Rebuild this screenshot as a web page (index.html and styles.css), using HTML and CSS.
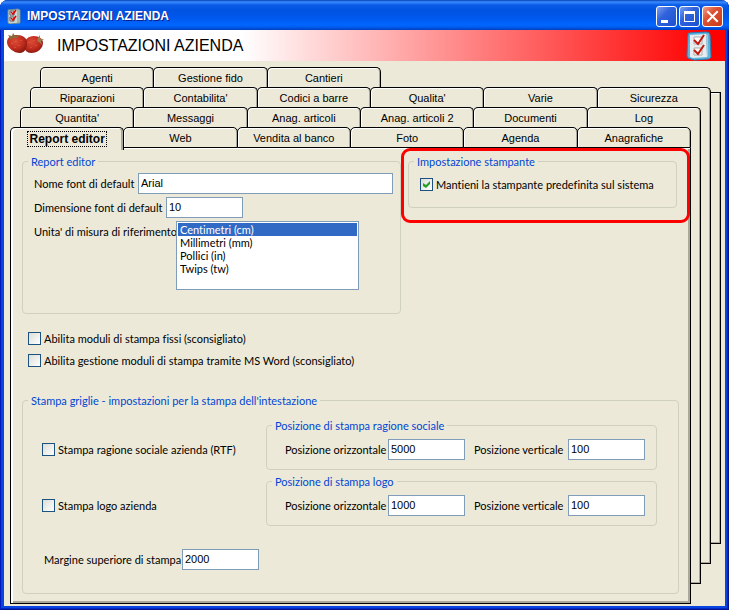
FILE: index.html
```html
<!DOCTYPE html>
<html lang="it">
<head>
    <meta charset="UTF-8">
    <meta name="viewport" content="width=device-width, initial-scale=1.0">
    <title>IMPOSTAZIONI AZIENDA</title>
    <link rel="stylesheet" href="styles.css">
</head>
<body>
    <div class="window">
        <div class="titlebar">
            <svg class="title-icon" width="14" height="16" viewBox="0 0 14 16" aria-hidden="true">
                <path d="M1 2l10-1 2 1v13l-10 1-2-1z" fill="#c9d3d6" stroke="#6d8b96"/>
                <path d="M11 2v13" stroke="#7d9a7d"/>
                <path d="M3 3h4v4h-4zM3 9h4v4h-4z" fill="#fff" stroke="#555"/>
                <path d="M4 4l2 2 3-4M4 10l2 2 3-4" fill="none" stroke="#e00000" stroke-width="1.5"/>
            </svg>
            <span class="title-text">IMPOSTAZIONI AZIENDA</span>
            <button class="win-btn" aria-label="Riduci a icona">
                <svg width="19" height="19" viewBox="0 0 19 19"><path d="M4 13h7v3H4z" fill="#fff"/></svg>
            </button>
            <button class="win-btn" aria-label="Ingrandisci">
                <svg width="19" height="19" viewBox="0 0 19 19"><path d="M4 4h11v11H4zM5 7v7h9V7z" fill="#fff" fill-rule="evenodd"/></svg>
            </button>
            <button class="win-btn close" aria-label="Chiudi">
                <svg width="19" height="19" viewBox="0 0 19 19"><path d="M5 5l9 9M14 5l-9 9" stroke="#fff" stroke-width="2" stroke-linecap="square"/></svg>
            </button>
        </div>

        <header class="banner">
            <svg class="berries" width="38" height="22" viewBox="0 0 38 22" aria-hidden="true">
                <defs>
                    <radialGradient id="berry" cx="40%" cy="35%" r="70%">
                        <stop offset="0" stop-color="#dc4a34"/>
                        <stop offset="0.6" stop-color="#c02c1e"/>
                        <stop offset="1" stop-color="#84180f"/>
                    </radialGradient>
                </defs>
                <path d="M17 12c0-5 4-9 10-9 5 0 9 3 9 7 0 5-5 10-12 10-4 0-7-3-7-8z" fill="url(#berry)"/>
                <path d="M0 9C0 4 5 2 10 2c6 0 10 3 10 8 0 6-3 10-7 10C7 20 0 15 0 9z" fill="url(#berry)"/>
                <path d="M3 5L1 2l4 1 1-3 2 3 5-1-3 3-4 0-3 2z" fill="#8a6a3a"/>
                <path d="M31 5l2-3 0 4 4 0-3 2 1 4-3-3-2-1z" fill="#a07a4a"/>
                <path d="M5 10v1M9 8v1M14 7v1M8 14v1M12 12v1M22 9v1M27 7v1M24 14v1M29 12v1" stroke="#e06a50"/>
            </svg>
            <h1>IMPOSTAZIONI AZIENDA</h1>
            <svg width="26" height="30" viewBox="0 0 26 30" aria-hidden="true">
                <path d="M3 2L20 1Q24 1 24 4L25 26Q24 28 22 28L8 29 2 27Q1 26 1 24L2 4Q2 2 3 2z" fill="#5fb4de" stroke="#2b7fb4"/>
                <path d="M4 4l16-1 1 23-14 1-3-1z" fill="#e6ecef"/>
                <path d="M20 3l2 1v21l-1 1z" fill="#b4c4cd"/>
                <path d="M8 6h8v7H8zM8 17h8v7H8z" fill="#fafafa" stroke="#aaa"/>
                <path d="M8 9l4 4 6-9M8 19l4 4 6-9" fill="none" stroke="#c4170c" stroke-width="2"/>
            </svg>
        </header>

        <main class="tab-stack">
            <div class="sheet sheet-4">
                <div class="tab-row">
                    <button class="tab">Agenti</button>
                    <button class="tab">Gestione fido</button>
                    <button class="tab">Cantieri</button>
                </div>
            </div>
            <div class="sheet-edge"></div>
            <div class="sheet sheet-3">
                <div class="tab-row">
                    <button class="tab">Riparazioni</button>
                    <button class="tab">Contabilita'</button>
                    <button class="tab">Codici a barre</button>
                    <button class="tab">Qualita'</button>
                    <button class="tab">Varie</button>
                    <button class="tab">Sicurezza</button>
                </div>
                <div class="page"></div>
            </div>
            <div class="sheet sheet-2">
                <div class="tab-row">
                    <button class="tab">Quantita'</button>
                    <button class="tab">Messaggi</button>
                    <button class="tab">Anag. articoli</button>
                    <button class="tab">Anag. articoli 2</button>
                    <button class="tab">Documenti</button>
                    <button class="tab">Log</button>
                </div>
                <div class="page"></div>
            </div>
            <div class="sheet sheet-1">
                <div class="tab-row front">
                    <button class="tab active"><span>Report editor</span></button>
                    <button class="tab">Web</button>
                    <button class="tab">Vendita al banco</button>
                    <button class="tab">Foto</button>
                    <button class="tab">Agenda</button>
                    <button class="tab">Anagrafiche</button>
                </div>
                <form class="page front-page">
                    <div class="top-row">
                        <fieldset class="report">
                            <legend>Report editor</legend>
                            <div class="field">
                                <label class="w-font" for="font">Nome font di default</label>
                                <input class="wide" type="text" id="font" value="Arial">
                            </div>
                            <div class="field">
                                <label class="w-size" for="size">Dimensione font di default</label>
                                <input type="text" id="size" value="10">
                            </div>
                            <div class="field list-field">
                                <label class="w-unit" for="unit">Unita' di misura di riferimento</label>
                                <select id="unit" size="5">
                                    <option selected>Centimetri (cm)</option>
                                    <option>Millimetri (mm)</option>
                                    <option>Pollici (in)</option>
                                    <option>Twips (tw)</option>
                                </select>
                            </div>
                        </fieldset>
                        <div class="highlight">
                            <fieldset class="printer">
                                <legend>Impostazione stampante</legend>
                                <label class="check"><input type="checkbox" checked>Mantieni la stampante predefinita sul sistema</label>
                            </fieldset>
                        </div>
                    </div>

                    <div class="modules">
                        <label class="check"><input type="checkbox">Abilita moduli di stampa fissi (sconsigliato)</label>
                        <label class="check"><input type="checkbox">Abilita gestione moduli di stampa tramite MS Word (sconsigliato)</label>
                    </div>

                    <fieldset class="grids">
                        <legend>Stampa griglie - impostazioni per la stampa dell'intestazione</legend>
                        <div class="grid-rows">
                            <label class="check"><input type="checkbox">Stampa ragione sociale azienda (RTF)</label>
                            <fieldset class="position">
                                <legend>Posizione di stampa ragione sociale</legend>
                                <div class="field">
                                    <label class="w-pos" for="rsX">Posizione orizzontale</label>
                                    <input type="text" id="rsX" value="5000">
                                </div>
                                <div class="field">
                                    <label class="w-pos-v" for="rsY">Posizione verticale</label>
                                    <input type="text" id="rsY" value="100">
                                </div>
                            </fieldset>
                            <label class="check"><input type="checkbox">Stampa logo azienda</label>
                            <fieldset class="position">
                                <legend>Posizione di stampa logo</legend>
                                <div class="field">
                                    <label class="w-pos" for="logoX">Posizione orizzontale</label>
                                    <input type="text" id="logoX" value="1000">
                                </div>
                                <div class="field">
                                    <label class="w-pos-v" for="logoY">Posizione verticale</label>
                                    <input type="text" id="logoY" value="100">
                                </div>
                            </fieldset>
                        </div>
                        <div class="field margin-field">
                            <label class="w-margin" for="margin">Margine superiore di stampa</label>
                            <input type="text" id="margin" value="2000">
                        </div>
                    </fieldset>
                </form>
            </div>
        </main>
    </div>
</body>
</html>
```
FILE: styles.css
```css
* {
    box-sizing: border-box;
}
body {
    margin: 0;
    font-family: "Liberation Sans", Arial, sans-serif;
    font-size: 11px;
    line-height: 13px;
    font-variant-ligatures: none;
    color: #000;
    background-color: #fff;
}
button, input, select {
    font: inherit;
    color: inherit;
    margin: 0;
}
.window {
    display: flex;
    flex-direction: column;
    min-height: 100vh;
    padding: 0 4px 4px;
    border-radius: 8px 8px 0 0;
    background-color: #0845e0;
    box-shadow: inset 1px 0 #0019b8, inset -1px -1px #00138c, inset -2px -2px #0028c4;
}

/* title bar */
.titlebar {
    display: flex;
    align-items: center;
    gap: 2px;
    height: 30px;
    margin: 0 -4px;
    padding: 2px 6px 0 7px;
    border-radius: 8px 8px 0 0;
    background: linear-gradient(#0842b8 0, #3a8cff 2px, #0a5ce8 5px, #0053e0 10px, #0058ee 18px, #0066ff 25px, #005cf0 27px, #0040c0 30px);
}
.title-text {
    flex: 1;
    padding-left: 4px;
    font-size: 12px;
    font-weight: bold;
    color: #fff;
    text-shadow: 1px 1px #0a1f8c;
}
.win-btn {
    width: 21px;
    height: 21px;
    padding: 0;
    border: 1px solid #fff;
    border-radius: 3px;
    background: linear-gradient(135deg, #7d9ff0, #2f62dc 40%, #1d50cf);
}
.win-btn svg {
    display: block;
}
.win-btn.close {
    background: linear-gradient(135deg, #f0a088, #dc5030 40%, #c83c18);
}

/* banner */
.banner {
    display: flex;
    align-items: center;
    height: 31px;
    padding: 0 13px 0 3px;
    background: linear-gradient(to right, #fff 33%, #f00 98%);
}
.berries {
    margin-bottom: 4px;
}
h1 {
    flex: 1;
    margin: 0;
    padding-left: 12px;
    font-size: 16px;
    font-weight: normal;
    line-height: 20px;
}

/* stacked tab sheets, all in the same grid cell */
.tab-stack {
    flex: 1;
    display: grid;
    padding: 6px 4px 2px 6px;
    background-color: #ece9d8;
}
.sheet, .sheet-edge {
    grid-area: 1 / 1;
    display: flex;
    flex-direction: column;
}
.sheet-4 {
    margin: 0 0 60px 30px;
}
.sheet-edge {
    margin: 25px 0 60px 30px;
    border: 1px solid #000;
    box-shadow: inset -1px -1px #aca899, inset 1px 1px #fff;
}
.sheet-3 {
    margin: 20px 10px 40px 20px;
}
.sheet-2 {
    margin: 40px 20px 20px 10px;
}
.sheet-1 {
    margin: 60px 30px 0 0;
}
.tab-row {
    display: grid;
    grid-template-columns: repeat(6, 1fr);
    height: 20px;
    padding-right: 1px;
}
.tab {
    margin-right: -1px;
    padding: 1px 0 0;
    border: 1px solid #000;
    border-bottom: none;
    border-radius: 5px 5px 0 0;
    background-color: #ece9d8;
    box-shadow: inset 1px 1px #fff, inset -1px 0 #aca899;
}
.front {
    height: 21px;
}
.front .tab {
    border-bottom: 1px solid #000;
}
.front .active {
    z-index: 1;
    margin-bottom: -2px;
    border-bottom: none;
    font-size: 12px;
    font-weight: bold;
    box-shadow: inset 2px 1px #fff, inset -2px 0 #aca899;
}
.active span {
    padding: 0 1px;
    outline: 1px dotted #000;
}
.page {
    flex: 1;
    border: 1px solid #000;
    border-top: none;
    background-color: #ece9d8;
    box-shadow: inset -1px -1px #aca899;
}
.front-page {
    font-family: Lato, "Liberation Sans", Arial, sans-serif;
    box-shadow: inset 2px 1px #fff, inset -2px -2px #aca899;
}

/* group boxes and fields */
fieldset {
    --inset: 11px;
    min-width: 0;
    margin: 0;
    padding-left: var(--inset);
    border: 1px solid #d0d0bf;
    border-radius: 4px;
}
legend {
    margin-left: calc(5px - var(--inset));
    padding: 0 3px;
    color: #0046d5;
}
label {
    white-space: nowrap;
}
.field {
    display: flex;
    align-items: center;
}
.field input, select {
    border: 1px solid #7f9db9;
    border-radius: 0;
    background-color: #fff;
}
.field input {
    width: 77px;
    height: 21px;
    padding: 0 2px 2px;
    font-family: "Liberation Sans", Arial, sans-serif;
}
.field .wide {
    flex: 1;
}
.list-field {
    align-items: flex-start;
}
.list-field label {
    padding-top: 4px;
}
select {
    width: 183px;
    height: 69px;
    padding: 1px;
    overflow: hidden;
    outline: none;
}
option {
    min-height: 13px;
    padding: 0 2px;
}
option:checked {
    color: #fff;
    background: linear-gradient(#316ac5, #316ac5);
}
.check {
    display: flex;
    align-items: center;
    gap: 3px;
}
.check input {
    appearance: none;
    flex: none;
    width: 13px;
    height: 13px;
    border: 1px solid #1c5180;
    background: linear-gradient(135deg, #dcdcd7, #fff);
}
.check input:checked::before {
    content: "";
    display: block;
    width: 7px;
    height: 7px;
    margin: 2px;
    background-color: #21a121;
    clip-path: polygon(0 29%, 43% 58%, 100% 0, 100% 43%, 43% 100%, 0 71%);
}
.w-font {
    width: 104px;
}
.w-size {
    width: 132px;
}
.w-unit {
    width: 142px;
}
.w-pos {
    width: 103px;
}
.w-pos-v {
    width: 94px;
}
.w-margin {
    width: 138px;
}

.top-row {
    display: grid;
    grid-template-columns: 379fr 289fr;
    align-items: start;
    padding-left: 11px;
}
.report {
    display: flex;
    flex-direction: column;
    gap: 3px;
    margin-top: 7px;
    padding: 5px 7px 23px var(--inset);
}
.highlight {
    padding: 4px 10px 12px 4px;
    border: 3px solid #f00;
    border-radius: 9px;
}
.printer {
    padding: 10px 10px 16px var(--inset);
}
.modules {
    display: flex;
    flex-direction: column;
    gap: 9px;
    padding: 18px 17px 27px;
}
.grids {
    --inset: 19px;
    margin: 0 11px 9px;
    padding: 12px 21px 23px var(--inset);
}
.grid-rows {
    display: grid;
    grid-template-columns: 224px 1fr;
    row-gap: 5px;
}
.grid-rows > .check {
    padding-top: 10px;
}
.position {
    --inset: 18px;
    display: flex;
    justify-content: space-between;
    padding: 7px 11px 9px var(--inset);
}
.margin-field {
    padding: 23px 0 0 2px;
}
```
